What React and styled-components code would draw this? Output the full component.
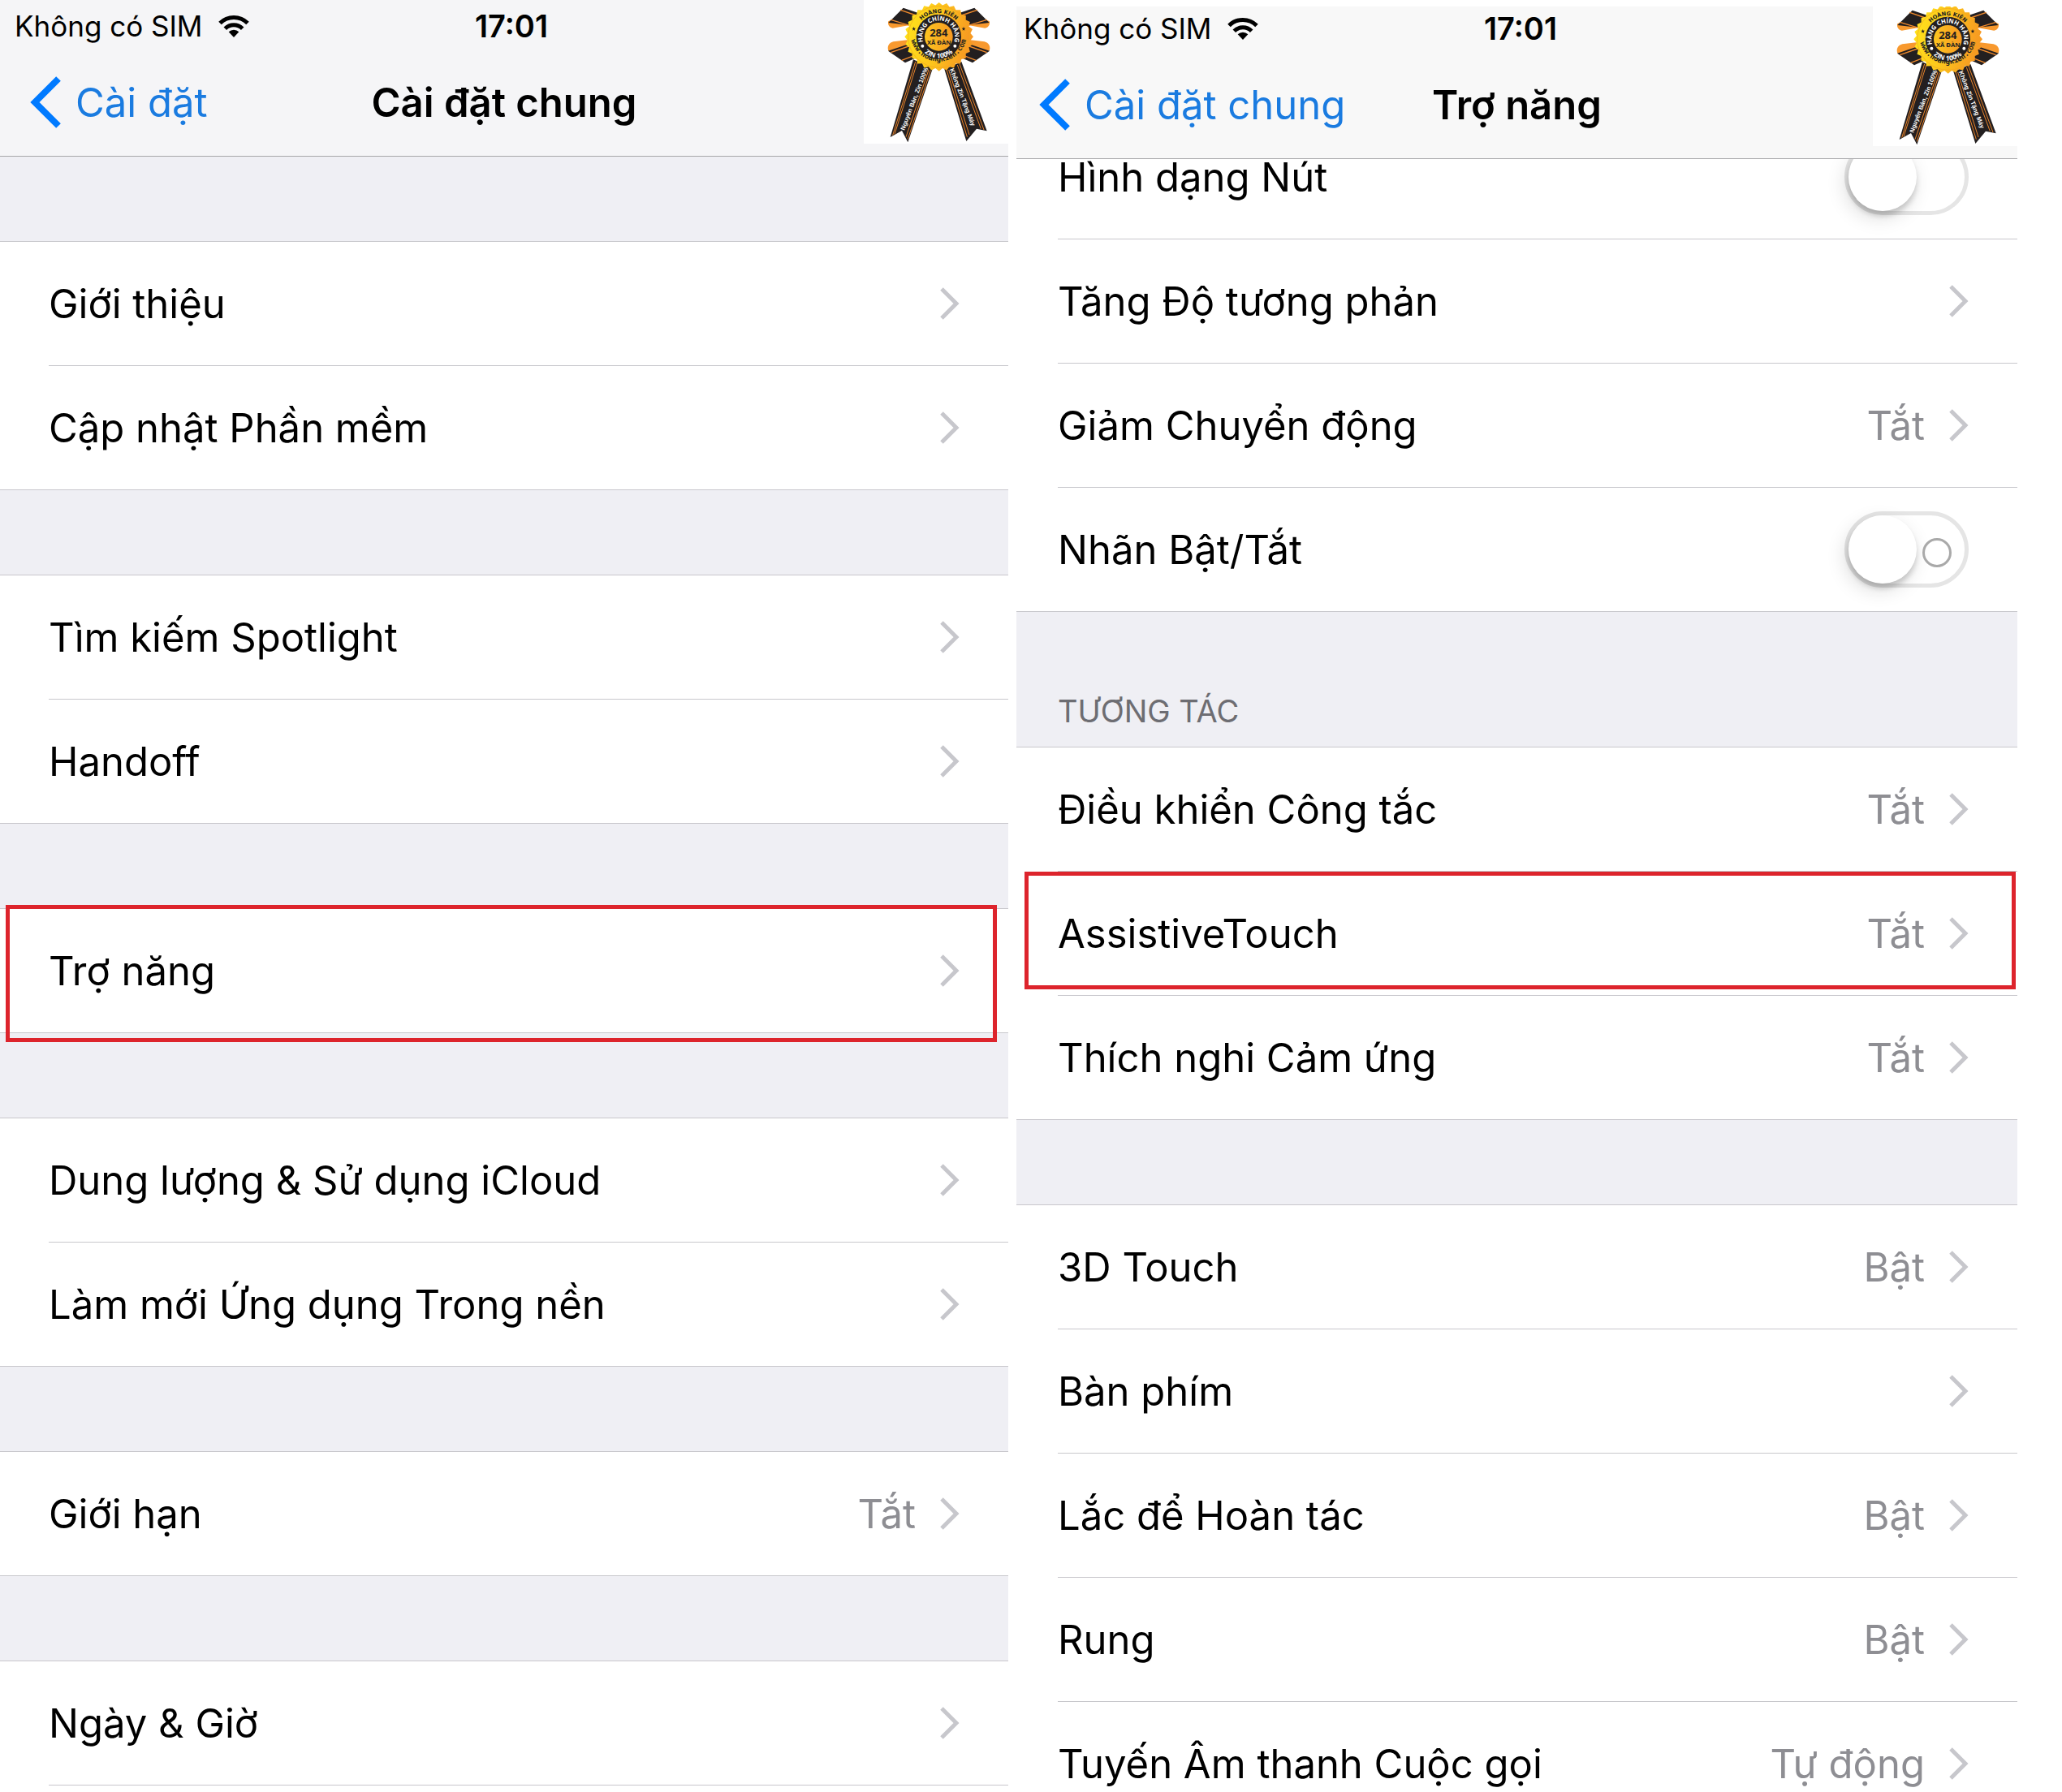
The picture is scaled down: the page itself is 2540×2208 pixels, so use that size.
import React, { useState } from "react";
import styled, { createGlobalStyle } from "styled-components";

const generalGroups = [
  { rows: [{ label: "Giới thiệu" }, { label: "Cập nhật Phần mềm" }] },
  { rows: [{ label: "Tìm kiếm Spotlight" }, { label: "Handoff" }] },
  { rows: [{ label: "Trợ năng", mark: "-5px 14px -12px 7px" }] },
  {
    rows: [
      { label: "Dung lượng & Sử dụng iCloud" },
      { label: "Làm mới Ứng dụng Trong nền" },
    ],
  },
  { rows: [{ label: "Giới hạn", value: "Tắt" }] },
  { rows: [{ label: "Ngày & Giờ" }], more: true },
];

const accessibilityGroups = [
  {
    rows: [
      { label: "Hình dạng Nút", toggle: true },
      { label: "Tăng Độ tương phản" },
      { label: "Giảm Chuyển động", value: "Tắt" },
      { label: "Nhãn Bật/Tắt", toggle: true, ring: true },
    ],
  },
  {
    title: "TƯƠNG TÁC",
    rows: [
      { label: "Điều khiển Công tắc", value: "Tắt" },
      { label: "AssistiveTouch", value: "Tắt", mark: "1px 2px 7px 10px" },
      { label: "Thích nghi Cảm ứng", value: "Tắt" },
    ],
  },
  {
    rows: [
      { label: "3D Touch", value: "Bật" },
      { label: "Bàn phím" },
      { label: "Lắc để Hoàn tác", value: "Bật" },
      { label: "Rung", value: "Bật" },
      { label: "Tuyến Âm thanh Cuộc gọi", value: "Tự động" },
    ],
  },
];

const WifiIcon = () => (
  <svg width="38" height="28" viewBox="0 0 38 28" aria-hidden="true">
    <g fill="none" stroke="#000" strokeWidth="5">
      <path d="M2 10.5a24 24 0 0 1 34 0" />
      <path d="M8.3 17.3a15 15 0 0 1 21.4 0" />
    </g>
    <path d="M19 28l-6.300-6.800a9 9 0 0 1 12.600 0z" />
  </svg>
);

const BackIcon = () => (
  <svg width="38" height="64" viewBox="0 0 38 64" aria-hidden="true">
    <path
      d="M35 3L6 32l29 29"
      fill="none"
      stroke="#007aff"
      strokeWidth="8"
    />
  </svg>
);

const Chevron = () => (
  <svg width="24" height="40" viewBox="0 0 24 40" aria-hidden="true">
    <path
      d="M2 2l18 18L2 38"
      fill="none"
      stroke="#c7c7cc"
      strokeWidth="5"
    />
  </svg>
);

// 28 teeth round the medal
const teeth = Array.from({ length: 56 }, (_, i) => {
  const r = i % 2 ? 117 : 127;
  const a = (i * Math.PI) / 28;
  return `${(290 + r * Math.sin(a)).toFixed(1)},${(
    136 -
    r * Math.cos(a)
  ).toFixed(1)}`;
}).join(" ");

const BadgeArt = ({ id }) => (
  <svg width="178" height="177" viewBox="12 0 534 531">
    <defs>
      <linearGradient id={`${id}-gold`} x1="0" x2="1" y1="0" y2="0.2">
        <stop offset="0" stopColor="#ffe81c" />
        <stop offset="0.55" stopColor="#fdc41c" />
        <stop offset="1" stopColor="#f79a22" />
      </linearGradient>
      <linearGradient id={`${id}-core`}>
        <stop offset="0" stopColor="#fdc51f" />
        <stop offset="1" stopColor="#f89a22" />
      </linearGradient>
      <path id={`${id}-o`} d="M201 136a88 88 0 0 1 176 0" />
      <path id={`${id}-u`} d="M184 122a105 105 0 1 0 210 0" />
      <path id={`${id}-i`} d="M237 166a60 60 0 1 1 104 0" />
      <path id={`${id}-z`} d="M210 136a79 79 0 0 0 158 0" />
    </defs>
    {[false, true].map((flip) => (
      <g
        key={String(flip)}
        transform={flip ? "translate(579 0) scale(-1 1)" : undefined}
      >
        <path d="M103 78c-4 14 4 24 16 26l66-12-20-34z" fill="#f8992e" />
        <path d="M158 29l58 20-34 44-79-9z" fill="#231f20" />
        <path d="M148 37l58 20M112 73l72 22" stroke="#f08a2c" strokeWidth="4" />
        <path d="M103 188c-6-16 2-30 18-34l64-8 8 34z" fill="#f8992e" />
        <path d="M102 188l78-26 34 48-49 22z" fill="#231f20" />
        <path d="M112 194l74-26M152 223l52-20" stroke="#f08a2c" strokeWidth="4" />
      </g>
    ))}
    <path d="M195 220l72 32-92 274-22-43-43 24z" fill="#231f20" />
    <path
      d="M203 228l-84 272M210 230l-84 266M252 258l-84 248M259 260l-84 254"
      stroke="#e8842b"
      strokeWidth="3"
    />
    <path d="M310 256l63-28 94 256-38-8-38 46z" fill="#231f20" />
    <path
      d="M318 258l76 248M326 258l76 240M358 240l87 236M366 236l90 244"
      stroke="#e8842b"
      strokeWidth="3"
    />
    <polygon points={teeth} fill={`url(#${id}-gold)`} />
    <circle
      cx="290"
      cy="136"
      r="114"
      fill="none"
      stroke="#f3a41f"
      strokeWidth="2"
    />
    <circle cx="289" cy="136" r="83" fill="#231f20" />
    <circle cx="289" cy="136" r="52" fill={`url(#${id}-core)`} />
    <g textAnchor="middle" fontWeight="700" fill="#231f20">
      <text fontFamily="'DejaVu Sans', sans-serif" fontSize="20">
        <textPath href={`#${id}-o`} startOffset="50%">
          HOÀNG KIÊN
        </textPath>
      </text>
      <text fontFamily="'DejaVu Sans Mono', monospace" fontSize="27">
        <textPath href={`#${id}-u`} startOffset="50%">
          www.hoangkien.com
        </textPath>
      </text>
      <text fontFamily="'Open Sans', sans-serif" fontSize="23" fill="#fff">
        <textPath href={`#${id}-i`} startOffset="50%">
          HÀNG CHÍNH HÀNG
        </textPath>
      </text>
      <text fontFamily="'Open Sans', sans-serif" fontSize="25" fill="#fff">
        <textPath href={`#${id}-z`} startOffset="50%">
          ZIN 100%
        </textPath>
      </text>
      <text x="289" y="135" fontFamily="'Open Sans', sans-serif" fontSize="39">
        284
      </text>
      <text x="290" y="164" fontFamily="'Open Sans', sans-serif" fontSize="23">
        XÃ ĐÀN
      </text>
      <g fontFamily="'Liberation Sans', sans-serif" fontSize="23" fill="#fff">
        <text transform="translate(206 368) rotate(-69)">
          Nguyên Bản, Zin 100%
        </text>
        <text transform="translate(370 362) rotate(69)">
          Không Zin Tặng Máy
        </text>
      </g>
    </g>
    <circle cx="229" cy="170" r="6" fill="#fff" />
    <circle cx="349" cy="170" r="6" fill="#fff" />
    <path d="M197 99l2 5h5l-4 4 1 5-4-3-4 3 1-5-4-4h5z" fill="#231f20" />
    <path d="M381 99l2 5h5l-4 4 1 5-4-3-4 3 1-5-4-4h5z" fill="#231f20" />
  </svg>
);

const Row = ({ item }) => {
  const [on, setOn] = useState(false);
  return (
    <RowItem>
      {item.toggle ? (
        <RowLabel>
          <Label>{item.label}</Label>
          <Toggle
            type="checkbox"
            role="switch"
            checked={on}
            onChange={() => setOn(!on)}
            $ring={item.ring}
          />
        </RowLabel>
      ) : (
        <RowLink href="#">
          <Label>{item.label}</Label>
          {item.value && <Value>{item.value}</Value>}
          <Chevron />
        </RowLink>
      )}
      {item.mark && <Mark $inset={item.mark} />}
    </RowItem>
  );
};

const Phone = ({ id, back, title, groups, cropped }) => (
  <Screen $cropped={cropped}>
    <Header $cropped={cropped}>
      <StatusBar>
        <Carrier>
          Không có SIM
          <WifiIcon />
        </Carrier>
        <Time>17:01</Time>
      </StatusBar>
      <NavBar>
        <BackLink href="#">
          <BackIcon />
          {back}
        </BackLink>
        <Title>{title}</Title>
      </NavBar>
      <Badge>
        <BadgeArt id={id} />
      </Badge>
    </Header>
    <List $scrolled={cropped}>
      {groups.map((group, i) => (
        <section key={i}>
          {!(cropped && i === 0) && (
            <GroupGap $titled={group.title}>{group.title}</GroupGap>
          )}
          <Group>
            {group.rows.map((item) => (
              <Row key={item.label} item={item} />
            ))}
            {group.more && (
              <RowItem aria-hidden="true">
                <EmptyRow />
              </RowItem>
            )}
          </Group>
        </section>
      ))}
    </List>
  </Screen>
);

const App = () => (
  <>
    <GlobalStyle />
    <Page>
      <Phone
        id="general"
        back="Cài đặt"
        title="Cài đặt chung"
        groups={generalGroups}
      />
      <Phone
        id="access"
        back="Cài đặt chung"
        title="Trợ năng"
        groups={accessibilityGroups}
        cropped
      />
    </Page>
  </>
);

export default App;

const GlobalStyle = createGlobalStyle`
  * {
    box-sizing: border-box;
  }

  body {
    margin: 0;
    background: #fff;
    color: #000;
    font-family: Inter, "Liberation Sans", sans-serif;
    font-size: 49px;
  }

  a {
    color: inherit;
    text-decoration: none;
  }

  svg {
    flex: none;
    display: block;
  }
`;

const Page = styled.main`
  display: grid;
  grid-template-columns: 1242fr 1233fr;
  gap: 10px;
  height: 100vh;
  padding-right: 55px;
  overflow: hidden;
`;

const Screen = styled.div`
  --inset: ${(p) => (p.$cropped ? "51px" : "60px")};
  min-width: 0;
  padding-top: ${(p) => (p.$cropped ? "8px" : "0")};
  overflow: hidden;
`;

const Header = styled.header`
  position: relative;
  z-index: 2;
  display: flex;
  flex-direction: column;
  justify-content: flex-end;
  height: ${(p) => (p.$cropped ? "188px" : "193px")};
  padding-bottom: 3px;
  overflow: hidden;
  background: ${(p) => (p.$cropped ? "#f8f8f8" : "#f5f5f7")};
  border-bottom: 1px solid #a7a7aa;
`;

const StatusBar = styled.div`
  flex: none;
  display: grid;
  grid-template-columns: 1fr auto 1fr;
  align-items: center;
  height: 63px;
  padding-left: calc(var(--inset) - 42px);
  font-size: 35px;
`;

const Carrier = styled.div`
  display: flex;
  align-items: center;
  gap: 20px;
`;

const Time = styled.div`
  font-size: 38px;
  font-weight: 600;
`;

const NavBar = styled.nav`
  flex: none;
  display: grid;
  grid-template-columns: 1fr auto 1fr;
  align-items: center;
  height: 126px;
`;

const BackLink = styled.a`
  display: flex;
  align-items: center;
  gap: 18px;
  padding-left: calc(var(--inset) - 23px);
  color: #1a7be0;
`;

const Title = styled.h1`
  margin: 0;
  font-size: 49px;
  font-weight: 600;
`;

const Badge = styled.div`
  position: absolute;
  right: 0;
  bottom: 15px;
  background: #fff;
`;

const List = styled.div`
  margin-top: ${(p) => (p.$scrolled ? "-55px" : "0")};
`;

const GroupGap = styled.h2`
  display: flex;
  align-items: flex-end;
  height: ${(p) => (p.$titled ? "166px" : "104px")};
  margin: 0;
  padding: 0 var(--inset) 24px;
  background: #efeff4;
  color: #6d6d72;
  font-size: 38px;
  font-weight: 400;
  line-height: 40px;
`;

const Group = styled.ul`
  margin: 0;
  padding: 0;
  list-style: none;
  background: #fff;
  border: solid #c8c7cc;
  border-width: 1px 0;
`;

const RowItem = styled.li`
  position: relative;
  padding-left: var(--inset);

  & + & > :first-child {
    border-top: 1px solid #c8c7cc;
  }
`;

const RowLink = styled.a`
  box-sizing: content-box;
  display: flex;
  align-items: center;
  gap: 30px;
  height: 152px;
  padding-right: 60px;
`;

const RowLabel = styled(RowLink).attrs({ as: "label" })``;

const EmptyRow = styled.div`
  height: 152px;
`;

const Label = styled.span`
  flex: 1;
  white-space: nowrap;
`;

const Value = styled.span`
  color: #8e8e93;
`;

const Toggle = styled.input`
  appearance: none;
  position: relative;
  width: 153px;
  height: 94px;
  margin: 0;
  border: 5px solid #e5e5e5;
  border-radius: 47px;
  background: #fff;

  &::before {
    content: "";
    position: absolute;
    top: 0;
    left: 0;
    width: 84px;
    height: 84px;
    border-radius: 50%;
    background: #fff;
    box-shadow: 0 6px 6px rgba(0, 0, 0, 0.16), -4px 8px 24px rgba(0, 0, 0, 0.14);
  }

  &::after {
    content: "";
    display: ${(p) => (p.$ring ? "block" : "none")};
    position: absolute;
    top: 28px;
    right: 16px;
    width: 30px;
    height: 30px;
    border: 3px solid #a9a9a9;
    border-radius: 50%;
  }

  &:checked {
    border-color: #4cd964;
    background: #4cd964;
  }

  &:checked::before {
    left: 59px;
  }
`;

const Mark = styled.div`
  position: absolute;
  inset: ${(p) => p.$inset};
  z-index: 1;
  border: 5px solid #dd242c;
  pointer-events: none;
`;
